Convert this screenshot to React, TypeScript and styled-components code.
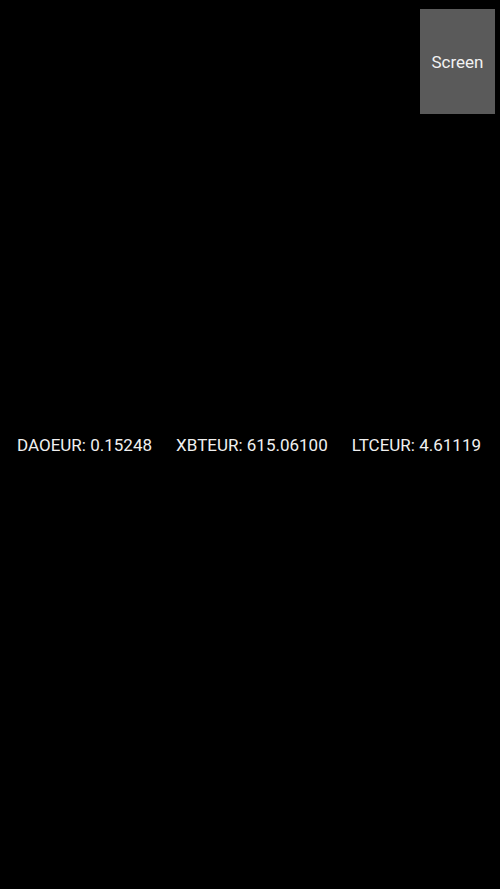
import React from "react";
import styled, { createGlobalStyle } from "styled-components";

const Global = createGlobalStyle`
  html, body { margin: 0; padding: 0; background: #000; }
  body { font-family: Roboto, "Noto Sans", sans-serif; }
`;

const Page = styled.div`
  width: 500px;
  height: 889px;
  background: #000;
  display: flex;
  flex-direction: column;
  overflow: hidden;
`;

const TopBar = styled.div`
  display: flex;
  justify-content: flex-end;
  padding: 9px 5px 0 0;
  height: 105px;
`;

const ScreenButton = styled.button`
  width: 75px;
  height: 105px;
  background: #5a5a5a;
  border: none;
  border-radius: 0;
  color: #f2f2f2;
  font-family: Roboto, sans-serif;
  font-size: 17px;
  padding: 0;
  display: flex;
  align-items: center;
  justify-content: center;
`;

const Center = styled.div`
  flex: 1;
  display: flex;
  align-items: center;
  padding-bottom: 114px;
`;

const TickerRow = styled.div`
  width: 100%;
  display: flex;
  justify-content: space-between;
  padding: 0 19px 0 17px;
  box-sizing: border-box;
`;

const Ticker = styled.span`
  color: #f0f0f0;
  font-family: Roboto, sans-serif;
  font-size: 17px;
  white-space: nowrap;
`;

const tickers = [
  { pair: "DAOEUR", value: "0.15248" },
  { pair: "XBTEUR", value: "615.06100" },
  { pair: "LTCEUR", value: "4.61119" },
];

export default function App() {
  return (
    <Page>
      <Global />
      <TopBar>
        <ScreenButton>Screen</ScreenButton>
      </TopBar>
      <Center>
        <TickerRow>
          {tickers.map((t) => (
            <Ticker key={t.pair}>
              {t.pair}: {t.value}
            </Ticker>
          ))}
        </TickerRow>
      </Center>
    </Page>
  );
}
